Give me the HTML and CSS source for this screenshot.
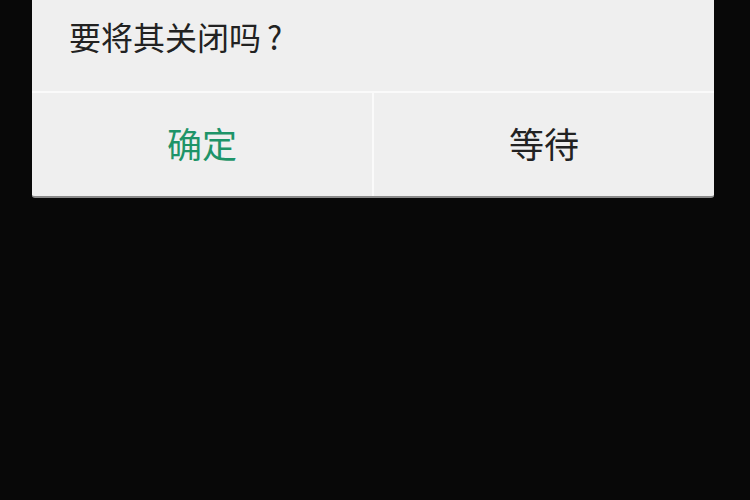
FILE: index.html
```html
<!DOCTYPE html>
<html lang="zh">
<head>
<meta charset="utf-8">
<link rel="stylesheet" href="styles.css">
</head>
<body>
<div class="dialog">
  <div class="message">要将其关闭吗<span class="q">?</span></div>
  <div class="actions">
    <div class="btn ok">确定</div>
    <div class="btn wait">等待</div>
  </div>
</div>
</body>
</html>
```
FILE: styles.css
```css
html, body {
  margin: 0;
  padding: 0;
  background: #080808;
  width: 750px;
  height: 500px;
  overflow: hidden;
  font-family: "Noto Sans CJK SC", "Noto Sans", sans-serif;
}
.dialog {
  margin-left: 32px;
  width: 682px;
  height: 196px;
  background: #efefef;
  border-radius: 0 0 3px 3px;
  border-bottom: 2px solid #8a8a8a;
  display: flex;
  flex-direction: column;
}
.message {
  height: 93px;
  box-sizing: border-box;
  padding: 13px 0 0 37px;
  font-size: 32px;
  line-height: 46px;
  color: #222;
  border-bottom: 2px solid #fafafa;
}
.q {
  margin-left: 6px;
}
.actions {
  flex: 1;
  display: flex;
}
.btn {
  flex: 1;
  display: flex;
  align-items: center;
  justify-content: center;
  font-size: 35px;
  padding-bottom: 4px;
}
.ok {
  color: #1e9468;
  border-right: 2px solid #fafafa;
}
.wait {
  color: #222;
}
```
